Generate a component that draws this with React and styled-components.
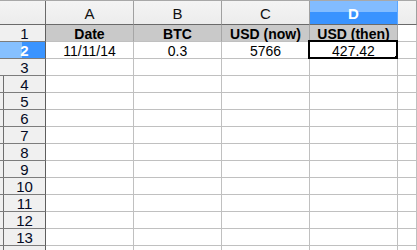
import React from 'react'
import styled, { createGlobalStyle } from 'styled-components'

const GlobalStyle = createGlobalStyle`
  html, body {
    margin: 0;
    padding: 0;
    background: #ffffff;
    overflow: hidden;
  }
`;

const Sheet = styled.div`
  display: grid;
  grid-template-columns: 46px 88px 88px 88px 88px 1fr;
  grid-template-rows: 24px;
  grid-auto-rows: 17px;
  width: 417px;
  height: 250px;
  overflow: hidden;
  font-family: "Liberation Sans", Arial, sans-serif;
  color: #000;
  border-top: 1px solid #a8a8a8;
  box-sizing: border-box;
`;

const Corner = styled.div`
  background: linear-gradient(#f4f4f4, #ececec);
  border-right: 1px solid #6a6a6a;
  border-bottom: 1px solid #6a6a6a;
  box-sizing: border-box;
`;

const ColHead = styled.div`
  box-sizing: border-box;
  display: flex;
  align-items: center;
  justify-content: center;
  font-size: 15px;
  padding-top: 1px;
  border-right: 1px solid ${({ $active }) => ($active ? '#5aa6ff' : '#a0a0a0')};
  border-bottom: 1px solid #6a6a6a;
  color: ${({ $active }) => ($active ? '#ffffff' : '#111')};
  font-weight: ${({ $active }) => ($active ? 'bold' : 'normal')};
  background: ${({ $active }) =>
    $active
      ? 'linear-gradient(#82bcff 0, #82bcff 11px, #3993ff 11px, #3993ff 100%)'
      : 'linear-gradient(#f4f4f4, #ececec)'};
`;

const RowHead = styled.div`
  box-sizing: border-box;
  display: flex;
  align-items: center;
  justify-content: center;
  font-size: 15px;
  padding-left: 4px;
  padding-top: 1px;
  border-right: 1px solid #5e5e5e;
  border-bottom: 1px solid #7c7c7c;
  color: ${({ $active }) => ($active ? '#ffffff' : '#050a24')};
  font-weight: ${({ $active }) => ($active ? 'bold' : 'normal')};
  background: ${({ $active, $edge }) =>
    $active
      ? 'linear-gradient(to right, #86c0ff 0, #86c0ff 22px, #3a94ff 22px)'
      : $edge
      ? 'linear-gradient(to right, #f0f0f0 3px, #6e6e6e 3px, #6e6e6e 4px, #f0f0f0 4px)'
      : '#f0f0f0'};
`;

const Cell = styled.div`
  position: relative;
  box-sizing: border-box;
  display: flex;
  align-items: center;
  justify-content: center;
  font-size: 14px;
  padding-top: 1px;
  white-space: nowrap;
  border-right: 1px solid ${({ $title }) => ($title ? '#a6a6a6' : '#c0c0c0')};
  border-bottom: 1px solid #c0c0c0;
  background: ${({ $title }) => ($title ? '#c9c9c9' : '#ffffff')};
  font-weight: ${({ $title }) => ($title ? 'bold' : 'normal')};
`;

const Selection = styled.div`
  position: absolute;
  left: -2px;
  top: -2px;
  right: -1px;
  bottom: -1px;
  border: 2px solid #000;
  pointer-events: none;

  &::after {
    content: '';
    position: absolute;
    right: -4px;
    bottom: -4px;
    width: 5px;
    height: 5px;
    background: #000;
  }
`;

const columns = ['A', 'B', 'C', 'D', ''];

const data = {
  1: ['Date', 'BTC', 'USD (now)', 'USD (then)', ''],
  2: ['11/11/14', '0.3', '5766', '427.42', ''],
};

const App = () => {
  const rows = Array.from({ length: 14 }, (_, i) => i + 1);

  return (
    <>
      <GlobalStyle />
      <Sheet>
        <Corner />
        {columns.map((c, i) => (
          <ColHead key={'h' + i} $active={c === 'D'}>{c}</ColHead>
        ))}
        {rows.map((r) => (
          <React.Fragment key={r}>
            <RowHead $active={r === 2} $edge={r >= 4}>{r < 14 ? r : ''}</RowHead>
            {columns.map((c, i) => (
              <Cell key={c + i} $title={r === 1 && i < 4}>
                {data[r] ? data[r][i] : ''}
                {r === 2 && c === 'D' && <Selection />}
              </Cell>
            ))}
          </React.Fragment>
        ))}
      </Sheet>
    </>
  );
};

export default App
